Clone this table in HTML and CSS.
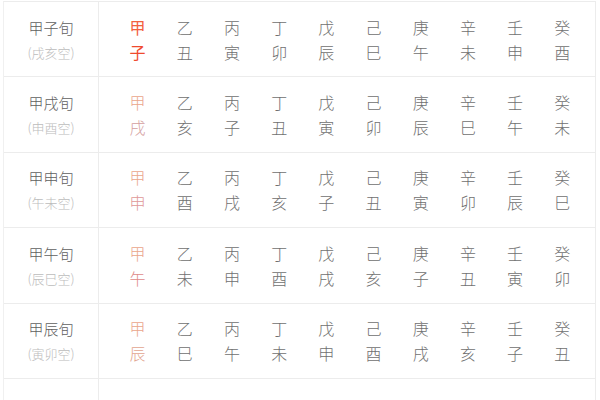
FILE: index.html
```html
<!DOCTYPE html>
<html lang="zh">
<head>
<meta charset="utf-8">
<link rel="stylesheet" href="styles.css">
</head>
<body>
<div class="table">
  <div class="row r1">
    <div class="head"><div class="xun">甲子旬</div><div class="kong">(戌亥空)</div></div>
    <div class="cells">
      <div class="col first"><span class="g">甲</span><span class="z">子</span></div>
      <div class="col"><span>乙</span><span>丑</span></div>
      <div class="col"><span>丙</span><span>寅</span></div>
      <div class="col"><span>丁</span><span>卯</span></div>
      <div class="col"><span>戊</span><span>辰</span></div>
      <div class="col"><span>己</span><span>巳</span></div>
      <div class="col"><span>庚</span><span>午</span></div>
      <div class="col"><span>辛</span><span>未</span></div>
      <div class="col"><span>壬</span><span>申</span></div>
      <div class="col"><span>癸</span><span>酉</span></div>
    </div>
  </div>
  <div class="row r2">
    <div class="head"><div class="xun">甲戌旬</div><div class="kong">(申酉空)</div></div>
    <div class="cells">
      <div class="col first"><span class="g">甲</span><span class="z">戌</span></div>
      <div class="col"><span>乙</span><span>亥</span></div>
      <div class="col"><span>丙</span><span>子</span></div>
      <div class="col"><span>丁</span><span>丑</span></div>
      <div class="col"><span>戊</span><span>寅</span></div>
      <div class="col"><span>己</span><span>卯</span></div>
      <div class="col"><span>庚</span><span>辰</span></div>
      <div class="col"><span>辛</span><span>巳</span></div>
      <div class="col"><span>壬</span><span>午</span></div>
      <div class="col"><span>癸</span><span>未</span></div>
    </div>
  </div>
  <div class="row r3">
    <div class="head"><div class="xun">甲申旬</div><div class="kong">(午未空)</div></div>
    <div class="cells">
      <div class="col first"><span class="g">甲</span><span class="z">申</span></div>
      <div class="col"><span>乙</span><span>酉</span></div>
      <div class="col"><span>丙</span><span>戌</span></div>
      <div class="col"><span>丁</span><span>亥</span></div>
      <div class="col"><span>戊</span><span>子</span></div>
      <div class="col"><span>己</span><span>丑</span></div>
      <div class="col"><span>庚</span><span>寅</span></div>
      <div class="col"><span>辛</span><span>卯</span></div>
      <div class="col"><span>壬</span><span>辰</span></div>
      <div class="col"><span>癸</span><span>巳</span></div>
    </div>
  </div>
  <div class="row r4">
    <div class="head"><div class="xun">甲午旬</div><div class="kong">(辰巳空)</div></div>
    <div class="cells">
      <div class="col first"><span class="g">甲</span><span class="z">午</span></div>
      <div class="col"><span>乙</span><span>未</span></div>
      <div class="col"><span>丙</span><span>申</span></div>
      <div class="col"><span>丁</span><span>酉</span></div>
      <div class="col"><span>戊</span><span>戌</span></div>
      <div class="col"><span>己</span><span>亥</span></div>
      <div class="col"><span>庚</span><span>子</span></div>
      <div class="col"><span>辛</span><span>丑</span></div>
      <div class="col"><span>壬</span><span>寅</span></div>
      <div class="col"><span>癸</span><span>卯</span></div>
    </div>
  </div>
  <div class="row r5">
    <div class="head"><div class="xun">甲辰旬</div><div class="kong">(寅卯空)</div></div>
    <div class="cells">
      <div class="col first"><span class="g">甲</span><span class="z">辰</span></div>
      <div class="col"><span>乙</span><span>巳</span></div>
      <div class="col"><span>丙</span><span>午</span></div>
      <div class="col"><span>丁</span><span>未</span></div>
      <div class="col"><span>戊</span><span>申</span></div>
      <div class="col"><span>己</span><span>酉</span></div>
      <div class="col"><span>庚</span><span>戌</span></div>
      <div class="col"><span>辛</span><span>亥</span></div>
      <div class="col"><span>壬</span><span>子</span></div>
      <div class="col"><span>癸</span><span>丑</span></div>
    </div>
  </div>
  <div class="row r6">
    <div class="head"></div>
    <div class="cells"></div>
  </div>
</div>
</body>
</html>
```
FILE: styles.css
```css
html, body {
  margin: 0;
  padding: 0;
  background: #ffffff;
}
body {
  font-family: "Noto Sans CJK SC", "Noto Sans", sans-serif;
  overflow: hidden;
  height: 400px;
}
.table {
  margin: 1px 0 0 3px;
  width: 593px;
  border-top: 1px solid #ececec;
  border-left: 1px solid #f0f0f0;
  border-right: 1px solid #ececec;
  box-sizing: border-box;
}
.row {
  display: flex;
  height: 75.4px;
  box-sizing: border-box;
  border-bottom: 1px solid #ececec;
}
.head {
  width: 94px;
  flex: none;
  border-right: 1px solid #ececec;
  display: flex;
  flex-direction: column;
  align-items: center;
  justify-content: center;
  padding-top: 1px;
}
.xun {
  font-size: 15px;
  font-weight: 300;
  line-height: 25px;
  color: #606060;
}
.kong {
  font-size: 13px;
  font-weight: 300;
  line-height: 25px;
  color: #bcbcbc;
}
.cells {
  flex: 1;
  display: flex;
  padding-left: 15px;
  align-items: center;
  padding-top: 1px;
}
.col {
  width: 47.2px;
  flex: none;
  display: flex;
  flex-direction: column;
  align-items: center;
  font-size: 16px;
  font-weight: 300;
  line-height: 25px;
  color: #707070;
}
.r1 .g { color: #f2603e; font-weight: 400; }
.r1 .z { color: #ef4a2e; font-weight: 400; }
.r2 .g, .r3 .g, .r4 .g, .r5 .g { color: #eaa68c; }
.r2 .z { color: #d4a0a0; }
.r3 .z { color: #e09898; }
.r4 .z { color: #de8a8a; }
.r5 .z { color: #e2a590; }
```
